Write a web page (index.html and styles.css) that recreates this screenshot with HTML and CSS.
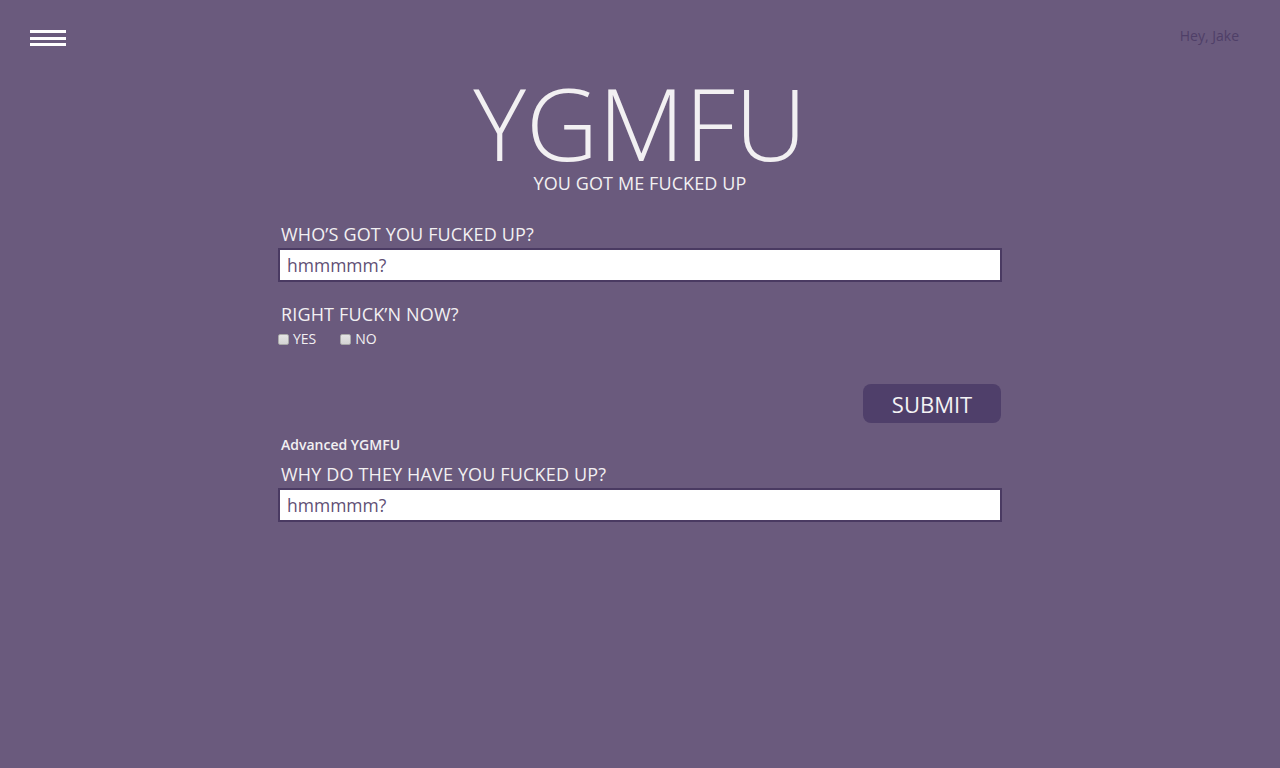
FILE: index.html
```html
<!DOCTYPE html>
<html>
<head>
<meta charset="utf-8">
<link rel="stylesheet" href="styles.css">
</head>
<body>
<header class="topbar">
  <div class="burger"><span></span><span></span><span></span></div>
  <div class="greet">Hey, Jake</div>
</header>
<main class="main">
  <h1 class="title">YGMFU</h1>
  <div class="subtitle">YOU GOT ME FUCKED UP</div>
  <form class="form">
    <label class="label">WHO’S GOT YOU FUCKED UP?</label>
    <input class="field" type="text" placeholder="hmmmmm?">
    <label class="label label-now">RIGHT FUCK’N NOW?</label>
    <div class="checks">
      <label class="check"><input type="checkbox"><span>YES</span></label>
      <label class="check"><input type="checkbox"><span>NO</span></label>
    </div>
    <div class="actions"><button type="button" class="submit">SUBMIT</button></div>
    <div class="advanced">Advanced YGMFU</div>
    <label class="label">WHY DO THEY HAVE YOU FUCKED UP?</label>
    <input class="field" type="text" placeholder="hmmmmm?">
  </form>
</main>
</body>
</html>
```
FILE: styles.css
```css
html, body {
  margin: 0;
  padding: 0;
  background: #6a5a7d;
  height: 100%;
}
body {
  font-family: "Open Sans", "Noto Sans", sans-serif;
  color: #f2f0f2;
}
.topbar {
  display: flex;
  justify-content: space-between;
  align-items: flex-start;
  padding: 30px 41px 0 30px;
  height: 50px;
  box-sizing: border-box;
}
.burger {
  display: flex;
  flex-direction: column;
  gap: 3.5px;
  width: 36px;
}
.burger span {
  display: block;
  height: 3px;
  background: #ffffff;
}
.greet {
  font-size: 14px;
  color: #4f3f68;
  margin-top: -4px;
}
.main {
  width: 724px;
  margin: 0 auto;
  display: flex;
  flex-direction: column;
}
.title {
  margin: 22px 0 0;
  font-weight: 300;
  font-size: 100px;
  line-height: 100px;
  text-align: center;
  color: #f2f0f2;
}
.subtitle {
  text-align: center;
  font-size: 18px;
  line-height: 22px;
  letter-spacing: 0.1px;
}
.form {
  display: flex;
  flex-direction: column;
  margin-top: 29px;
}
.label {
  font-size: 18px;
  line-height: 22px;
  letter-spacing: 0.15px;
  padding-left: 3px;
  margin-bottom: 3px;
}
.label-now {
  margin-top: 21px;
  margin-bottom: 0;
}
.field {
  box-sizing: border-box;
  width: 724px;
  height: 34px;
  border: 2px solid #4a3a62;
  background: #fff;
  font-family: inherit;
  font-size: 17.5px;
  padding: 0 7px;
  color: #5f4f75;
  outline: none;
}
.field::placeholder {
  color: #5f4f75;
  opacity: 1;
}
.checks {
  display: flex;
  gap: 24px;
  margin-top: 5px;
}
.check {
  display: flex;
  align-items: center;
  font-size: 14px;
  line-height: 18px;
  font-weight: 500;
}
.check input {
  appearance: none;
  -webkit-appearance: none;
  box-sizing: border-box;
  margin: 0 4px 0 0;
  width: 11px;
  height: 11px;
  border: 1px solid #a9a9a9;
  border-radius: 2px;
  background: linear-gradient(#e4e4e4, #d4d4d4);
}
.actions {
  display: flex;
  justify-content: flex-end;
  margin-top: 36px;
  padding-right: 1px;
}
.submit {
  width: 138px;
  height: 39px;
  border: none;
  border-radius: 8px;
  background: #4f3f6a;
  color: #f4f2f4;
  font-family: inherit;
  font-size: 22px;
  font-weight: 500;
  padding: 0;
}
.advanced {
  font-size: 14px;
  font-weight: 600;
  line-height: 20px;
  padding-left: 3px;
  margin-top: 12px;
  margin-bottom: 8px;
}
```
